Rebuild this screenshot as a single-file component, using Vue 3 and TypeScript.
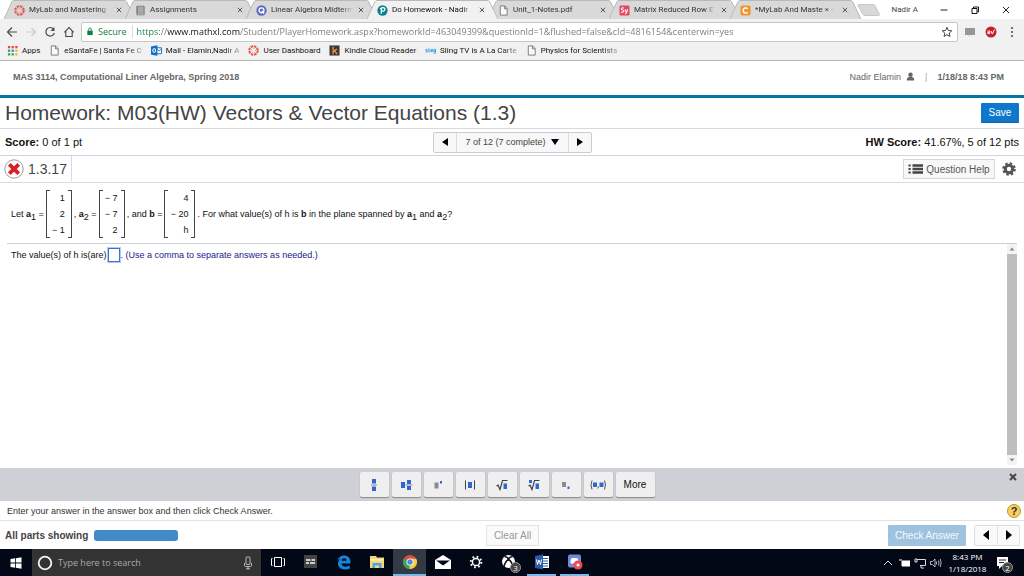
<script setup lang="ts">
import { ref } from 'vue'

interface Tab { icon: string; title: string; active?: boolean }
interface Bookmark { icon: string; label: string; fade?: boolean }

const tabs: Tab[] = [
  { icon: 'canvas', title: 'MyLab and Mastering' },
  { icon: 'book', title: 'Assignments' },
  { icon: 'quizlet', title: 'Linear Algebra Midterm' },
  { icon: 'pearson', title: 'Do Homework - Nadir', active: true },
  { icon: 'page', title: 'Unit_1-Notes.pdf' },
  { icon: 'symbolab', title: 'Matrix Reduced Row E' },
  { icon: 'chegg', title: '*MyLab And Maste × -' },
]

const bookmarks: Bookmark[] = [
  { icon: 'apps', label: 'Apps' },
  { icon: 'page', label: 'eSantaFe | Santa Fe C', fade: true },
  { icon: 'outlook', label: 'Mail - Elamin,Nadir A', fade: true },
  { icon: 'canvas', label: 'User Dashboard' },
  { icon: 'kindle', label: 'Kindle Cloud Reader' },
  { icon: 'sling', label: 'Sling TV is A La Carte', fade: true },
  { icon: 'page', label: 'Physics for Scientists', fade: true },
]

const url = ref('https://www.mathxl.com/Student/PlayerHomework.aspx?homeworkId=463049399&questionId=1&flushed=false&cId=4816154&centerwin=yes')
const answer = ref('')
const search = ref('')

const vectors = {
  a1: ['1', '2', '− 1'],
  a2: ['− 7', '− 7', '2'],
  b: ['4', '− 20', 'h'],
}

const templates = ['Fraction', 'Mixed number', 'Exponent', 'Absolute value', 'Square root', 'Nth root', 'Subscript', 'Ordered pair']
const taskApps = [
  { id: 'taskview', label: 'Task View' },
  { id: 'panel', label: 'Panel' },
  { id: 'edge', label: 'Edge' },
  { id: 'explorer', label: 'File Explorer' },
  { id: 'chrome', label: 'Chrome', open: true, focused: true },
  { id: 'mail', label: 'Mail' },
  { id: 'settings', label: 'Settings' },
  { id: 'xbox', label: 'Xbox' },
  { id: 'word', label: 'Word', open: true },
  { id: 'discord', label: 'Discord', open: true },
]
</script>

<template>
  <div class="screen">
    <svg class="defs" aria-hidden="true">
      <symbol id="i-canvas" viewBox="0 0 12 12">
        <circle cx="6" cy="6" r="4.6" fill="none" stroke="#e2574c" stroke-width="2.2" stroke-dasharray="2.7 .9" />
        <circle cx="6" cy="6" r="2.4" fill="none" stroke="#e2574c" stroke-width=".8" stroke-dasharray=".8 1.1" />
      </symbol>
      <symbol id="i-book" viewBox="0 0 12 12">
        <rect x="1.5" y=".8" width="9" height="10.4" rx="1" fill="#777" />
        <rect x="3" y="1.6" width="6.4" height="7" fill="#aaa" />
        <path d="M2.6 9.8h7" stroke="#ddd" />
      </symbol>
      <symbol id="i-quizlet" viewBox="0 0 12 12">
        <circle cx="6" cy="6" r="5.6" fill="#5b6bbf" />
        <circle cx="6" cy="5.8" r="2.7" fill="none" stroke="#fff" stroke-width="1.4" />
        <path d="M6.3 6.6 9 9.4" stroke="#fff" stroke-width="1.4" />
      </symbol>
      <symbol id="i-pearson" viewBox="0 0 12 12">
        <circle cx="6" cy="6" r="5.6" fill="#087f95" />
        <path d="M4.6 9.6 5 3.6M3.4 4.4C5 2 9 2.600 8.600 5 8.200 6.900 6 7 5 6.500" fill="none" stroke="#fff" stroke-width="1.4" />
      </symbol>
      <symbol id="i-page" viewBox="0 0 12 12">
        <path d="M2.500 1h4.800l2.700 2.800V11H2.500zM7 1v3.200h3" fill="#fbfbfb" stroke="#777" stroke-width="1" />
      </symbol>
      <symbol id="i-symbolab" viewBox="0 0 12 12">
        <rect x=".5" y=".5" width="11" height="11" rx="1.500" fill="#ea4664" />
        <path d="M5.200 3.500C4 2.700 2.400 3.200 2.500 4.300c.1 1.400 2.900 1 2.800 2.500C5.200 8.200 3 8.300 2.200 7.500M6.600 4.600l1.400 3.600M9.600 4.600 8 8.500c-.3.900-.8 1.200-1.500 1" fill="none" stroke="#fff" stroke-width="1.100" />
      </symbol>
      <symbol id="i-chegg" viewBox="0 0 12 12">
        <rect x=".5" y=".5" width="11" height="11" rx="2" fill="#f39429" />
        <path d="M8.400 4.100C7 2.600 3.500 3 3.500 6s3.500 3.400 4.900 1.900" fill="none" stroke="#fff" stroke-width="1.700" />
      </symbol>
      <symbol id="i-apps" viewBox="0 0 12 12">
        <path d="M1 1h2.500v2.500H1zM5 1h2.500v2.500H5zM9 1h2.500v2.500H9z" fill="#e34a3f" />
        <path d="M1 5h2.500v2.500H1z" fill="#2aa657" /><path d="M5 5h2.500v2.500H5z" fill="#3c7de0" /><path d="M9 5h2.500v2.500H9z" fill="#efb52a" />
        <path d="M1 9h2.500v2.500H1zM5 9h2.500v2.500H5z" fill="#2aa657" /><path d="M9 9h2.500v2.500H9z" fill="#efb52a" />
      </symbol>
      <symbol id="i-outlook" viewBox="0 0 12 12">
        <path d="M6 3h5.500v6.500H6z" fill="#fff" stroke="#0f6fc5" /><path d="m6 4 3 2.500L11.500 4" fill="none" stroke="#0f6fc5" />
        <path d="m0 1.500 7-1.300v11.600L0 10.500z" fill="#0f6fc5" />
        <ellipse cx="3.500" cy="6" rx="1.500" ry="2" fill="none" stroke="#fff" stroke-width="1.100" />
      </symbol>
      <symbol id="i-kindle" viewBox="0 0 12 12">
        <path d="M.5.500h11v11H.5z" fill="#3c3835" />
        <path d="M4.500 2v8M8.600 4.300 4.700 7.200M6 6.200 8.800 10" stroke="#f39a2d" stroke-width="1.400" fill="none" />
      </symbol>
      <symbol id="i-sling" viewBox="0 0 12 12">
        <path d="M2.600 4.800H1v1.400h1.500v1.500H.6M4.200 3.500v4.300M5.600 4.800v3M7 7.800v-3h1.400v3M11.300 4.800H9.700v2.700h1.600V4.800v4.300H9.600" fill="none" stroke="#2a9fd8" stroke-width=".9" />
      </symbol>
    </svg>

    <header class="browser">
      <div class="tabstrip">
        <nav class="tabs" aria-label="Tabs">
          <div v-for="t in tabs" :key="t.title" class="tab" :class="{ active: t.active }">
            <svg class="tabshape" viewBox="0 0 131 19" preserveAspectRatio="none" aria-hidden="true">
              <path d="M0 19 8 1.500Q8.500.500 10 .500H120Q122 .500 122.500 1.500L131 19" />
            </svg>
            <svg class="fav"><use :href="'#i-' + t.icon" /></svg>
            <span class="tabtitle">{{ t.title }}</span>
            <button class="close" aria-label="Close tab"><svg viewBox="0 0 6 6"><path d="m.8.800 4.400 4.400M5.200.800.800 5.200" stroke="#555" /></svg></button>
          </div>
          <button class="newtab" aria-label="New tab"><svg viewBox="0 0 24 12"><path d="M1 1.500Q.800.500 2 .500h14q1.500 0 2 1l4.500 9q.300 1-1 1H8q-1.500 0-2-1z" fill="#d8d8d8" stroke="#c6c6c6" /></svg></button>
        </nav>
        <div class="wincontrols">
          <span class="profile">Nadir A</span>
          <button aria-label="Minimize"><svg viewBox="0 0 10 10"><path d="M1.500 5h7" stroke="#222" /></svg></button>
          <button aria-label="Restore"><svg viewBox="0 0 10 10"><path d="M2 3.500h5v5H2zM3.500 3V2H8.500v5H7.500" fill="none" stroke="#111" /></svg></button>
          <button aria-label="Close window"><svg viewBox="0 0 10 10"><path d="m2 2 6 6M8 2 2 8" stroke="#222" /></svg></button>
        </div>
      </div>
      <div class="toolbar">
        <div class="navbtns">
          <button aria-label="Back"><svg viewBox="0 0 12 12"><path d="M11 6H2M6 1.500 1.500 6 6 10.500" fill="none" stroke="#4a4a4a" stroke-width="1.200" /></svg></button>
          <button aria-label="Forward"><svg viewBox="0 0 12 12"><path d="M1.500 6h9M6.500 2l4 4-4 4" fill="none" stroke="#c9c9c9" stroke-width="1.200" /></svg></button>
          <button aria-label="Reload"><svg viewBox="0 0 12 12"><path d="M9.600 3.200A4.300 4.300 0 1 0 10.300 7" fill="none" stroke="#4a4a4a" stroke-width="1.200" /><path d="M10.500 1v4h-4z" fill="#4a4a4a" /></svg></button>
          <button aria-label="Home"><svg viewBox="0 0 12 12"><path d="M1.300 6.300 6 1.600l4.700 4.700M2.800 5.200v5.300h6.400V5.200" fill="none" stroke="#4a4a4a" stroke-width="1.100" /></svg></button>
        </div>
        <div class="omnibox">
          <svg class="lock" viewBox="0 0 8 10"><path d="M1 4h6v5H1z" fill="#128040" /><path d="M2.500 4V2.700a1.500 1.500 0 0 1 3 0V4" fill="none" stroke="#128040" /></svg>
          <label class="secure" for="url">Secure</label>
          <input id="url" v-model="url" class="url" />
          <button class="star" aria-label="Bookmark"><svg viewBox="0 0 12 12"><path d="m6 1.300 1.400 3.200 3.400.300-2.600 2.300.800 3.400-3-1.800-3 1.800.800-3.400L1.200 4.800l3.400-.300z" fill="none" stroke="#444" /></svg></button>
        </div>
        <div class="exts">
          <button aria-label="Cast"><svg viewBox="0 0 12 12"><path d="M1 2h10v7H1z" fill="#969696" /><path d="M4 10h4" stroke="#ddd" /></svg></button>
          <button aria-label="Extension"><svg viewBox="0 0 12 12"><circle cx="6" cy="6" r="5.500" fill="#c7202b" /><path d="M2.500 5h2.200v2.600H2.800V6.300h1.800M6 5l1.300 3L9.500 3.500" fill="none" stroke="#fff" /></svg></button>
          <button aria-label="Menu"><svg viewBox="0 0 12 12"><g fill="#555"><circle cx="6" cy="2" r="1.100" /><circle cx="6" cy="6" r="1.100" /><circle cx="6" cy="10" r="1.100" /></g></svg></button>
        </div>
      </div>
      <nav class="bookmarks" aria-label="Bookmarks">
        <a v-for="b in bookmarks" :key="b.label" href="#" :class="{ fade: b.fade }"><svg><use :href="'#i-' + b.icon" /></svg><span>{{ b.label }}</span></a>
      </nav>
    </header>

    <div class="course">
      <strong>MAS 3114, Computational Liner Algebra, Spring 2018</strong>
      <div class="user">
        <span>Nadir Elamin</span>
        <svg viewBox="0 0 10 10"><circle cx="5" cy="3" r="2.500" fill="#666" /><path d="M1 9.500V8q0-2 2.500-2.500h3Q9 6 9 8v1.500z" fill="#666" /></svg>
        <span class="bar">|</span>
        <strong>1/18/18 8:43 PM</strong>
      </div>
    </div>

    <div class="titlerow">
      <h1>Homework: M03(HW) Vectors &amp; Vector Equations (1.3)</h1>
      <button class="save">Save</button>
    </div>

    <div class="scorerow">
      <span><b>Score:</b> 0 of 1 pt</span>
      <div class="pager">
        <button aria-label="Previous question"><svg viewBox="0 0 8 10"><path d="M7 1v8L1 5z" /></svg></button>
        <div class="picker">
          <select aria-label="Question"><option>7 of 12 (7 complete)</option></select>
          <svg viewBox="0 0 8 6" aria-hidden="true"><path d="M0 0h8L4 6z" /></svg>
        </div>
        <button aria-label="Next question"><svg viewBox="0 0 8 10"><path d="M1 1v8l6-4z" /></svg></button>
      </div>
      <span class="hw"><b>HW Score:</b> 41.67%, 5 of 12 pts</span>
    </div>

    <div class="questionrow">
      <div class="qid">
        <svg viewBox="0 0 20 20"><circle cx="10" cy="10" r="9.200" fill="#fff" stroke="#999" /><path d="m5.300 5.300 9.400 9.400M14.700 5.300 5.300 14.700" stroke="#d9202a" stroke-width="3.800" /></svg>
        <span>1.3.17</span>
      </div>
      <div class="qtools">
        <button class="help">
          <svg viewBox="0 0 15 10"><path d="M4.500 1.500H15M4.500 5H15M4.500 8.500H15" stroke="#444" stroke-width="2.400" /><path d="M.5 1.500h2.200M.5 5h2.200M.5 8.500h2.200" stroke="#444" stroke-width="1.800" /></svg>
          Question Help
        </button>
        <button class="gear" aria-label="Settings">
          <svg viewBox="0 0 14 14"><circle cx="7" cy="7" r="3.700" fill="none" stroke="#555" stroke-width="3" /><circle cx="7" cy="7" r="5.700" fill="none" stroke="#555" stroke-width="2.200" stroke-dasharray="2.400 2.080" /></svg>
        </button>
      </div>
    </div>

    <main class="work">
      <div class="problem">
        <span>Let <b>a</b><sub>1</sub> =</span>
        <div class="matrix"><span v-for="(v, i) in vectors.a1" :key="i">{{ v }}</span></div>
        <span>, <b>a</b><sub>2</sub> =</span>
        <div class="matrix"><span v-for="(v, i) in vectors.a2" :key="i">{{ v }}</span></div>
        <span>, and <b>b</b> =</span>
        <div class="matrix wide"><span v-for="(v, i) in vectors.b" :key="i">{{ v }}</span></div>
        <span>. For what value(s) of h is <b>b</b> in the plane spanned by <b>a</b><sub>1</sub> and <b>a</b><sub>2</sub>?</span>
      </div>
      <div class="answerarea">
        <div class="answer">
          <label for="hval">The value(s) of h is(are)</label>
          <input id="hval" v-model="answer" />
          <span>. <em>(Use a comma to separate answers as needed.)</em></span>
        </div>
        <div class="scroll" aria-hidden="true">
          <svg viewBox="0 0 10 10"><path d="m2.500 6.500 2.500-3 2.500 3z" fill="#888" /></svg>
          <div class="thumb"></div>
          <svg viewBox="0 0 10 10"><path d="m2.500 3.500 2.500 3 2.500-3z" fill="#888" /></svg>
        </div>
      </div>
    </main>

    <div class="palette">
      <div class="keys">
        <button v-for="(name, i) in templates" :key="name" class="key" :aria-label="name">
          <svg viewBox="0 0 20 14">
            <g v-if="i === 0"><path d="M8 1h4v4.500H8zM8 8.500h4V13H8z" fill="#2f66d0" /><path d="M7 7h6" stroke="#888" /></g>
            <g v-else-if="i === 1"><path d="M5 4h4v6H5zM11 2h4v4h-4zM11 8h4v4h-4z" fill="#2f66d0" /><path d="M9.500 7h7" stroke="#888" /></g>
            <g v-else-if="i === 2"><path d="M6.500 4.500h4v6h-4z" fill="#8c8c8c" /><path d="M12 3h2v2.500h-2z" fill="#2f66d0" /></g>
            <g v-else-if="i === 3"><path d="M8 4h4v6H8z" fill="#2f66d0" /><path d="M5.500 2.500v9M14.500 2.500v9" stroke="#444" /></g>
            <g v-else-if="i === 4"><path d="M4.500 8l1.500-.800 2 4.300 2.500-9h5" fill="none" stroke="#444" stroke-width="1.200" /><path d="M11.500 5.500h3.500V11h-3.500z" fill="#2f66d0" /></g>
            <g v-else-if="i === 5"><path d="M4.500 8l1.500-.800 2 4.300 2.500-9h5" fill="none" stroke="#444" stroke-width="1.200" /><path d="M11.500 5.500h3.500V11h-3.500zM5 2h3v3H5z" fill="#2f66d0" /></g>
            <g v-else-if="i === 6"><path d="M6 4h4v5H6z" fill="#8c8c8c" /><path d="M11.500 8.500h2V11h-2z" fill="#2f66d0" /></g>
            <g v-else><path d="M5 4.500h4V9H5zM11.500 4.500h4V9h-4z" fill="#2f66d0" /><path d="M4 2.500q-2 4.500 0 9M16.500 2.500q2 4.500 0 9M10.500 8.500l-.8 2" fill="none" stroke="#555" /></g>
          </svg>
        </button>
        <button class="key more">More</button>
      </div>
      <button class="dismiss" aria-label="Close palette"><svg viewBox="0 0 8 8"><path d="m1 1 6 6M7 1 1 7" stroke="#444" stroke-width="2" /></svg></button>
    </div>

    <div class="hint">
      <span>Enter your answer in the answer box and then click Check Answer.</span>
      <button class="qmark" aria-label="Help">?</button>
    </div>

    <div class="actions">
      <div class="parts"><strong>All parts showing</strong><div class="progress"></div></div>
      <button class="clear" disabled>Clear All</button>
      <div class="checks">
        <button class="check">Check Answer</button>
        <div class="steps">
          <button aria-label="Previous"><svg viewBox="0 0 8 10"><path d="M7 0v10L1 5z" /></svg></button>
          <button aria-label="Next"><svg viewBox="0 0 8 10"><path d="M1 0v10l6-5z" /></svg></button>
        </div>
      </div>
    </div>

    <footer class="taskbar">
      <button class="start" aria-label="Start"><svg viewBox="0 0 12 12"><path d="m.5 2 4.500-.700V5.600H.5zM5.800 1.200l5.700-.900v5.300H5.800zM.5 6.400H5v4.300L.5 10zM5.800 6.400h5.700v5.300l-5.700-.900z" fill="#fff" /></svg></button>
      <label class="search">
        <svg class="cortana" viewBox="0 0 16 16"><circle cx="8" cy="8" r="6.300" fill="none" stroke="#f4f4f4" stroke-width="1.800" /></svg>
        <input v-model="search" placeholder="Type here to search" aria-label="Type here to search" />
        <svg class="mic" viewBox="0 0 10 14"><rect x="3" y="1" width="4" height="7.500" rx="1" fill="none" stroke="#bbb" /><path d="M1.500 7v2.500q0 1 1 1h5q1 0 1-1V7M5 10.500V13M3 12.800h4" fill="none" stroke="#bbb" /></svg>
      </label>
      <div class="apps">
        <button v-for="a in taskApps" :key="a.id" :aria-label="a.label" :class="{ open: a.open, focused: a.focused }">
          <svg viewBox="0 0 20 20">
            <g v-if="a.id === 'taskview'" fill="none" stroke="#fff"><path d="M6.500 5.500h7v9h-7zM4.500 6.500h-1v7h1M15.500 6.500h1v7h-1" /></g>
            <g v-else-if="a.id === 'panel'"><path d="M3 3h13v13H3z" fill="#444" /><path d="M5 8h4.500M10.500 8H14M5 11h3M9 11h5" stroke="#ccc" stroke-width="2" /></g>
            <path v-else-if="a.id === 'edge'" d="M3.500 9C4.500 1.500 16 1.500 16.500 9.500v2H7.500c.2 3.400 5 4 8.300 2v3C10 19 3.500 16.500 4 11c.2-2.500 2-4 3.500-4.500C5.800 6.700 4.300 7.600 3.500 9zM7.600 8.700h5C12.500 5.500 8 5.600 7.600 8.700z" fill="#1685de" />
            <g v-else-if="a.id === 'explorer'"><path d="M3 4h6l1 1.500h7V16H3z" fill="#f7d67b" /><path d="M3 7h14v1.500H3z" fill="#fff0b8" /><path d="M5.500 16v-5h9v5h-2.500v-2.500H8V16z" fill="#4aa8df" /></g>
            <g v-else-if="a.id === 'chrome'"><circle cx="10" cy="10" r="7" fill="#df4b3c" /><path d="M10 10 3.900 6.500A7 7 0 0 0 9.500 17l3.500-6z" fill="#3ba55a" /><path d="M10 10h-.2L9.500 17A7 7 0 0 0 16.200 6.800H10z" fill="#f6cd3b" /><circle cx="10" cy="10" r="3.500" fill="#fff" /><circle cx="10" cy="10" r="2.700" fill="#4c86e8" /></g>
            <g v-else-if="a.id === 'mail'"><path d="m2 8 8-5 8 5v9H2z" fill="#fff" /><path d="M3 8.500h14l-7 5z" fill="#050a18" /></g>
            <g v-else-if="a.id === 'settings'" fill="none" stroke="#fff"><circle cx="10" cy="10" r="3.600" stroke-width="1.500" /><circle cx="10" cy="10" r="5.300" stroke-width="2" stroke-dasharray="1.660 2.500" /></g>
            <g v-else-if="a.id === 'xbox'"><circle cx="9.500" cy="9.500" r="6.500" fill="#fff" /><path d="M5 15Q6 9.500 9.500 7.500q3.500 2 4.500 7.500M5.500 4.500Q9 5 9.500 7.500 10 5 13.500 4.500" fill="none" stroke="#10131c" stroke-width="1.500" /></g>
            <g v-else-if="a.id === 'word'"><path d="M10 4h7v12h-7z" fill="#fff" /><path d="M11 6.500h5M11 9h5M11 11.500h5M11 14h5" stroke="#2b5caa" /><path d="m3 4 8-1.500v15L3 16z" fill="#2b5caa" /><path d="m4.500 7.500 1 5L7 8l1.500 4.500 1-5" fill="none" stroke="#fff" /></g>
            <g v-else><rect x="3" y="2.500" width="13" height="13" rx="2" fill="#7289da" /><path d="M5.500 11Q5.500 6 7.500 6h4q2 0 2 5l-2 1-1-1h-2l-1 1z" fill="#fff" /><circle cx="13" cy="13" r="4.500" fill="#ee4b52" /><circle cx="13" cy="13" r="1.500" fill="#fff" /></g>
          </svg>
          <span v-if="a.id === 'xbox'" class="badge">3</span>
        </button>
      </div>
      <div class="tray">
        <svg viewBox="0 0 12 12"><path d="m2 8 4-4 4 4" fill="none" stroke="#ddd" /></svg>
        <svg viewBox="0 0 12 12"><path d="M4 4h8v5H4zM1 3h3" fill="#fff" stroke="#fff" /></svg>
        <svg viewBox="0 0 12 12"><path d="M3 2.500h8.500v6H6M7 8.500v2.500h3M1 2h2v3H1z" fill="none" stroke="#ddd" /></svg>
        <svg viewBox="0 0 12 12"><path d="M.5 4.500h2L5 2v8L2.500 7.500h-2zM6.500 4.500v3M8.500 3.500q1 2.500 0 5M10.300 2q1.500 4 0 8" fill="none" stroke="#ddd" stroke-width=".8" /></svg>
        <div class="clock"><span>8:43 PM</span><span>1/18/2018</span></div>
        <button class="notes" aria-label="Notifications"><svg viewBox="0 0 14 14"><path d="M1 1h11v9H6l-3 3v-3H1z" fill="#fff" /><path d="M3 4h7M3 6.500h5" stroke="#222" /></svg><span class="badge">2</span></button>
      </div>
    </footer>
  </div>
</template>

<style>
html, body { margin: 0; }
</style>

<style scoped>
.screen { min-height: 100vh; display: flex; flex-direction: column; background: #fff; color: #333; font-family: "Liberation Sans", Arial, sans-serif; font-size: 10px; overflow: hidden; }
.screen * { box-sizing: border-box; }
button { font: inherit; color: inherit; background: none; border: 0; padding: 0; margin: 0; display: flex; align-items: center; justify-content: center; }
input, select { font: inherit; color: inherit; border: 0; padding: 0; margin: 0; background: none; outline: 0; }
svg { display: block; flex: none; }
.defs { position: absolute; width: 0; height: 0; }

.browser { font-family: Roboto, "Open Sans", sans-serif; font-size: 8px; color: #333; background: #f1f1f1; border-bottom: 1px solid #b5b5b5; }
.tabstrip { display: flex; justify-content: space-between; height: 19px; background: #fff; }
.tabs { display: flex; padding-left: 4px; }
.tab { position: relative; display: flex; align-items: center; width: 131px; margin-right: -10px; padding: 1px 12px 0 10px; color: #333; }
.tab.active { z-index: 1; color: #111; }
.tabshape { position: absolute; inset: 0; width: 100%; height: 100%; }
.tabshape path { fill: #d9d9d9; stroke: #b9b9b9; }
.tab.active .tabshape path { fill: #f1f1f1; }
.fav { position: relative; width: 11px; height: 11px; margin-right: 4px; }
.tabtitle { position: relative; flex: 1; min-width: 0; overflow: hidden; white-space: nowrap; line-height: 14px; mask-image: linear-gradient(to right, #000 85%, transparent); }
.close { position: relative; width: 8px; height: 8px; margin-left: 4px; }
.close svg { width: 6px; height: 6px; }
.newtab { margin-left: 6px; }
.newtab svg { width: 24px; height: 12px; }
.wincontrols { display: flex; align-items: center; padding-right: 13px; }
.wincontrols svg { width: 10px; height: 10px; }
.wincontrols button { margin-left: 21px; }
.profile { color: #444; }
.toolbar { display: flex; align-items: center; height: 23px; margin-top: 1px; }
.navbtns { display: flex; gap: 7px; padding: 0 6px; }
.navbtns svg, .exts svg, .star svg { width: 12px; height: 12px; }
.omnibox { flex: 1; display: flex; align-items: center; height: 20px; background: #fff; border: 1px solid #c6c6c6; border-radius: 2px; padding: 0 4px; font-family: "Open Sans", "Noto Sans", sans-serif; font-size: 9px; }
.lock { width: 8px; height: 9px; margin-right: 4px; }
.secure { color: #128040; padding-right: 5px; border-right: 1px solid #ddd; margin-right: 4px; }
.url { flex: 1; min-width: 0; height: 18px; color: transparent; background: linear-gradient(to right, #128040 0 23px, #777 23px 30px, #111 30px 103px, #777 103px); background-clip: text; -webkit-background-clip: text; }
.exts { display: flex; gap: 9px; padding: 0 6px; }
.bookmarks { display: flex; align-items: center; height: 17px; padding: 0 0 2px 7px; gap: 9px; }
.bookmarks a { display: flex; align-items: center; gap: 4px; color: #111; text-decoration: none; white-space: nowrap; }
.bookmarks svg { width: 11px; height: 11px; }
.bookmarks .fade span { mask-image: linear-gradient(to right, #000 80%, transparent 110%); }

.course { display: flex; align-items: center; justify-content: space-between; height: 37px; padding: 0 20px 3px 13px; border-bottom: 3px solid #0379a0; color: #666; font-size: 9px; }
.user { display: flex; align-items: center; gap: 5px; }
.user svg { width: 9px; height: 9px; }
.bar { color: #c2a36f; margin: 0 5px; }
.titlerow { display: flex; align-items: center; justify-content: space-between; height: 31px; padding: 0 5px; border-bottom: 1px solid #d5d9e4; }
h1 { margin: 0; font-size: 21px; line-height: 24px; font-weight: 400; color: #444; white-space: nowrap; }
.save { width: 38px; height: 20px; background: #0f78cc; border-bottom: 1px solid #0b62ad; color: #fff; border-radius: 1px; }
.scorerow { display: grid; grid-template-columns: 1fr auto 1fr; align-items: center; height: 27px; padding: 0 5px; border-bottom: 1px solid #cfd3e2; color: #111; font-size: 11px; }
.hw { text-align: right; }
.pager { display: flex; height: 21px; border: 1px solid #ccc; border-radius: 2px; background: #f8f8f8; }
.pager > button { width: 22px; }
.pager > button svg { width: 8px; height: 10px; }
.picker { display: flex; align-items: center; gap: 4px; border-left: 1px solid #ddd; border-right: 1px solid #ddd; padding: 0 9px; color: #444; }
.picker select { appearance: none; font-size: 9px; }
.picker svg { width: 8px; height: 6px; fill: #000; }
.questionrow { display: flex; justify-content: space-between; height: 27px; border-bottom: 1px solid #d8dae6; }
.qid { display: flex; align-items: center; gap: 4px; padding: 0 4px; margin-bottom: 1px; border-right: 1px solid #d5d9e4; font-size: 14px; color: #444; }
.qid svg { width: 20px; height: 20px; }
.qtools { display: flex; align-items: center; gap: 7px; padding-right: 8px; }
.help { gap: 3px; width: 92px; height: 20px; background: #f8f8f8; border: 1px solid #d5d5d5; color: #555; white-space: nowrap; }
.help svg { width: 15px; height: 10px; }
.gear svg { width: 14px; height: 14px; }

.work { flex: 1; display: flex; flex-direction: column; padding: 0 7px; font-size: 9px; color: #111; }
.problem { display: flex; align-items: center; gap: 2px; height: 60px; padding: 2px 0 0 4px; white-space: nowrap; }
.problem sub { font-size: 9px; line-height: 0; vertical-align: -3px; }
.matrix { position: relative; width: 26px; padding-right: 6px; display: grid; grid-auto-rows: 16px; align-items: center; text-align: right; border: solid #444; border-width: 0 1px; }
.matrix.wide { width: 31px; }
.matrix::before, .matrix::after { content: ""; position: absolute; top: 0; bottom: 0; width: 3px; border: solid #444; border-width: 1px 0; }
.matrix::before { left: 0; }
.matrix::after { right: 0; }
.answerarea { flex: 1; display: flex; justify-content: space-between; border-top: 1px solid #ccd0da; padding-bottom: 3px; }
.answer { display: flex; align-items: center; height: 22px; padding-left: 4px; gap: 1px; }
.answer input { width: 12px; height: 14px; border: 1px solid #3b70d6; outline: 1px solid #b6caf0; background: #fff; }
.answer em { font-style: normal; color: #1a1a8c; }
.scroll { width: 10px; display: flex; flex-direction: column; background: #f3f3f3; }
.scroll svg { width: 10px; height: 10px; }
.thumb { flex: 1; background: #bebebe; }

.palette { display: flex; align-items: center; height: 33px; background: #cfd0d6; padding: 0 7px 0 5px; }
.keys { flex: 1; display: flex; justify-content: center; gap: 3px; }
.key { width: 29px; height: 25px; background: #efefef; border-radius: 2px; box-shadow: 0 1px 1px #888; color: #111; }
.key svg { width: 20px; height: 14px; }
.key.more { width: 39px; }
.dismiss { align-self: flex-start; margin-top: 5px; }
.dismiss svg { width: 8px; height: 8px; }
.hint { display: flex; align-items: center; justify-content: space-between; height: 20px; padding: 0 3px 0 7px; border-bottom: 1px solid #e2e2e2; font-size: 9px; }
.qmark { width: 14px; height: 14px; border-radius: 50%; background: #f9cf5f; border: 1px solid #bb9436; font-weight: 700; font-size: 11px; line-height: 12px; color: #333; }
.actions { display: grid; grid-template-columns: 1fr auto 1fr; align-items: center; height: 28px; padding: 0 4px 0 5px; }
.parts { display: flex; align-items: center; gap: 6px; color: #444; }
.progress { width: 84px; height: 11px; border-radius: 3px; background: #428bca; }
.clear { width: 53px; height: 21px; border: 1px solid #e2e2e2; background: #fafafa; color: #999; }
.checks { display: flex; justify-content: flex-end; gap: 8px; }
.check { width: 78px; height: 21px; background: #9fc3de; color: #f4f9fc; border-radius: 1px; }
.steps { display: flex; border: 1px solid #ddd; border-radius: 2px; background: #fafafa; }
.steps button { width: 22px; }
.steps button + button { border-left: 1px solid #e2e2e2; }
.steps svg { width: 8px; height: 10px; }

.taskbar { display: flex; height: 27px; background: #030817; color: #fff; font-family: "Open Sans", "Noto Sans", sans-serif; }
.start { width: 32px; }
.start svg { width: 12px; height: 12px; }
.search { display: flex; align-items: center; width: 229px; background: #333; padding: 0 8px 0 5px; font-size: 9px; }
.cortana { width: 16px; height: 16px; margin-right: 5px; }
.search input { flex: 1; min-width: 0; }
.search input::placeholder { color: #aaa; opacity: 1; }
.mic { width: 10px; height: 14px; }
.apps { display: flex; }
.apps button { position: relative; width: 33px; border-bottom: 2px solid transparent; }
.apps button svg { width: 20px; height: 20px; }
.apps .open { border-image: linear-gradient(to right, transparent 3px, #76b9ed 3px calc(100% - 3px), transparent calc(100% - 3px)) 1; }
.apps .focused { background: #343a45; border-image: none; border-bottom-color: #76b9ed; }
.badge { position: absolute; right: 4px; bottom: 1px; width: 11px; height: 11px; border-radius: 50%; background: #444; border: 1px solid #999; font-size: 8px; line-height: 9px; text-align: center; color: #fff; }
.tray { margin-left: auto; display: flex; align-items: center; gap: 4px; padding-right: 11px; }
.tray > svg { width: 12px; height: 12px; }
.clock { width: 43px; display: flex; flex-direction: column; align-items: center; font-size: 8px; line-height: 12px; }
.notes { position: relative; width: 20px; height: 20px; }
.notes svg { width: 14px; height: 14px; }
.notes .badge { right: 0; bottom: 0; }
</style>
